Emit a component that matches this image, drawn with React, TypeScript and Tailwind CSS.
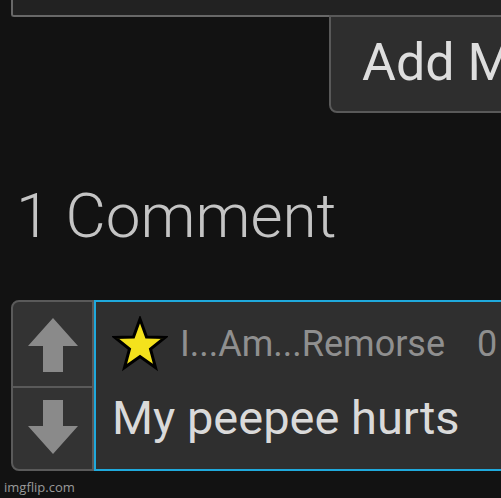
function Star() {
    return (
        <svg width="56" height="56" viewBox="0 0 56 56" className="shrink-0">
            <polygon
                points="28,3 34.5,21 53,21.5 38.5,33 43.5,51.5 28,40.5 12.5,51.5 17.5,33 3,21.5 21.5,21"
                fill="#f4e21c"
                stroke="#000"
                strokeWidth="3"
                strokeLinejoin="miter"
            />
        </svg>
    );
}

function VoteArrow({ down = false }: { down?: boolean }) {
    return (
        <svg width="50" height="54" viewBox="0 0 50 54" className={down ? 'rotate-180' : ''}>
            <polygon points="25,0 50,28 35,28 35,54 15,54 15,28 0,28" fill="#8a8a8a" />
        </svg>
    );
}

export default function App() {
    return (
        <div className="relative w-[501px] h-[498px] overflow-hidden bg-[#121212] font-['Roboto',sans-serif]">
            {/* textarea edge */}
            <div className="ml-[11px] h-[17px] w-[600px] bg-[#222222] border-l-2 border-b-2 border-[#686868] rounded-bl-[3px]" />

            {/* Add Meme button */}
            <div className="ml-[329px] -mt-[2px] h-[98px] w-[260px] bg-[#2e2e2e] border-2 border-[#595959] rounded-bl-[8px] flex items-center pl-[31px] pb-[2px]">
                <span className="text-[52px] leading-none text-[#dedede] whitespace-nowrap">Add Meme</span>
            </div>

            <h2 className="mt-[72px] ml-[16px] text-[62px] leading-none font-light text-[#c4c4c4] whitespace-nowrap">
                1 Comment
            </h2>

            {/* comment */}
            <div className="mt-[53px] ml-[11px] flex h-[171px]">
                <div className="w-[83px] shrink-0 flex flex-col border-2 border-[#5a5a5a] rounded-l-[8px] bg-[#333333]">
                    <div className="h-[86px] flex items-center justify-center border-b-2 border-[#5a5a5a] pt-[2px]">
                        <VoteArrow />
                    </div>
                    <div className="flex-1 flex items-center justify-center pb-[4px]">
                        <VoteArrow down />
                    </div>
                </div>
                <div className="w-[500px] shrink-0 border-2 border-[#1fa9dc] bg-[#2f2f2f] pl-[16px] pt-[14px]">
                    <div className="flex items-center gap-[12px]">
                        <Star />
                        <span className="text-[36px] leading-none text-[#8f8f8f] whitespace-nowrap">I...Am...Remorse</span>
                        <span className="ml-[20px] text-[36px] leading-none text-[#8f8f8f]">0 ups</span>
                    </div>
                    <p className="mt-[22px] text-[47px] leading-none text-[#dadada] whitespace-nowrap">My peepee hurts</p>
                </div>
            </div>

            <span className="absolute left-[4px] bottom-[4px] text-[13px] leading-none text-[#9a9a9a] font-['Open_Sans',sans-serif]">
                imgflip.com
            </span>
        </div>
    );
}
